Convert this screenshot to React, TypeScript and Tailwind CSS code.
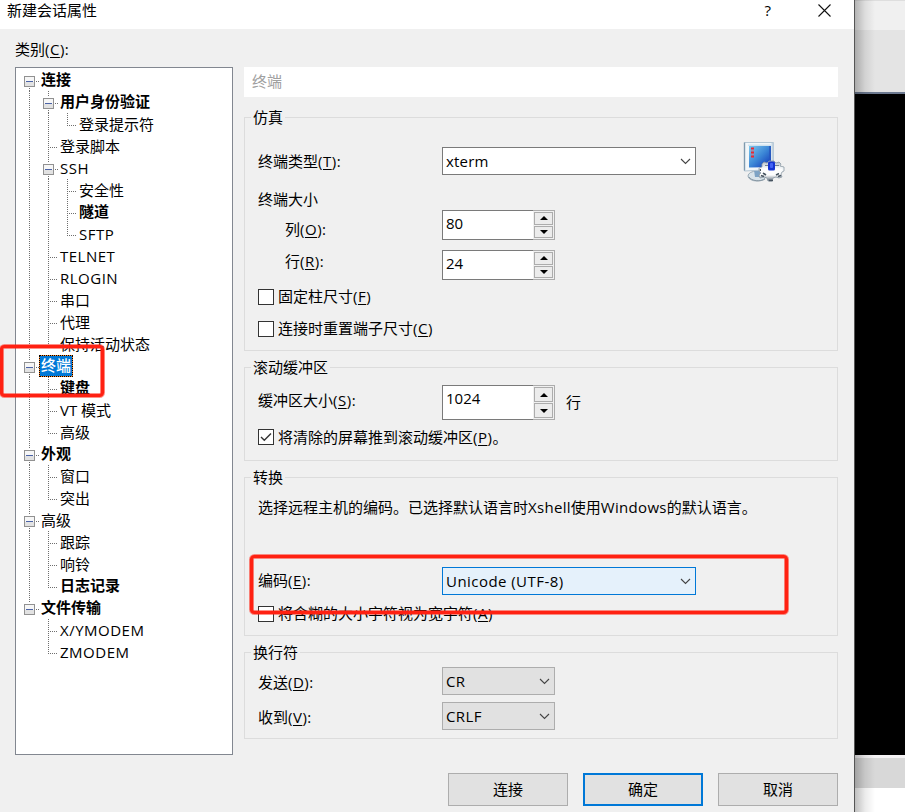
import React from 'react';
import clsx from 'clsx';

type Guide = 'line' | 'tee' | 'end' | 'none' | 'first' | 'box' | 'last';

interface TreeRow {
  label: string;
  guides: Guide[];
  bold?: boolean;
  selected?: boolean;
}

const treeRows: TreeRow[] = [
  { label: '连接', guides: ['first'], bold: true },
  { label: '用户身份验证', guides: ['line', 'box'], bold: true },
  { label: '登录提示符', guides: ['line', 'line', 'end'] },
  { label: '登录脚本', guides: ['line', 'tee'] },
  { label: 'SSH', guides: ['line', 'box'] },
  { label: '安全性', guides: ['line', 'line', 'tee'] },
  { label: '隧道', guides: ['line', 'line', 'tee'], bold: true },
  { label: 'SFTP', guides: ['line', 'line', 'end'] },
  { label: 'TELNET', guides: ['line', 'tee'] },
  { label: 'RLOGIN', guides: ['line', 'tee'] },
  { label: '串口', guides: ['line', 'tee'] },
  { label: '代理', guides: ['line', 'tee'] },
  { label: '保持活动状态', guides: ['line', 'end'] },
  { label: '终端', guides: ['box'], bold: true, selected: true },
  { label: '键盘', guides: ['line', 'tee'], bold: true },
  { label: 'VT 模式', guides: ['line', 'tee'] },
  { label: '高级', guides: ['line', 'end'] },
  { label: '外观', guides: ['box'], bold: true },
  { label: '窗口', guides: ['line', 'tee'] },
  { label: '突出', guides: ['line', 'end'] },
  { label: '高级', guides: ['box'] },
  { label: '跟踪', guides: ['line', 'tee'] },
  { label: '响铃', guides: ['line', 'tee'] },
  { label: '日志记录', guides: ['line', 'end'], bold: true },
  { label: '文件传输', guides: ['last'], bold: true },
  { label: 'X/YMODEM', guides: ['none', 'tee'] },
  { label: 'ZMODEM', guides: ['none', 'end'] },
];

// Dotted connector lines and the collapse box, one 19px cell per level
function GuideCell({ kind }: { kind: Guide }) {
  const isBox = kind === 'box' || kind === 'first' || kind === 'last';
  const dots = { stroke: '#6e6e6e', strokeDasharray: '1 1' };
  return (
    <svg width="19" height="22" viewBox="0 0 19 22" className="shrink-0" shapeRendering="crispEdges">
      {(kind === 'line' || kind === 'tee') && <line x1="9.5" y1="0" x2="9.5" y2="22" {...dots} />}
      {kind === 'end' && <line x1="9.5" y1="0" x2="9.5" y2="13" {...dots} />}
      {(kind === 'tee' || kind === 'end') && <line x1="11" y1="12.5" x2="18" y2="12.5" {...dots} />}
      {isBox && (
        <>
          {kind !== 'first' && <line x1="9.5" y1="0" x2="9.5" y2="6" {...dots} />}
          {kind !== 'last' && <line x1="9.5" y1="19" x2="9.5" y2="22" {...dots} />}
          <line x1="16" y1="12.5" x2="19" y2="12.5" {...dots} />
          <rect x="4.5" y="7.5" width="10" height="10" fill="#f6f6f6" stroke="#919191" />
          <rect x="5" y="13" width="9" height="4" fill="#e2e2e2" />
          <line x1="6" y1="12.5" x2="13" y2="12.5" stroke="#4b63a7" />
        </>
      )}
    </svg>
  );
}

function CategoryTree() {
  return (
    <div className="w-[218px] h-[688px] bg-white border border-[#828790] pt-px pl-1">
      {treeRows.map((row, i) => (
        <div key={i} className="flex h-[22px]">
          {row.guides.map((g, j) => (
            <GuideCell key={j} kind={g} />
          ))}
          <span
            className={clsx(
              'px-px border border-dotted whitespace-nowrap',
              row.bold ? 'leading-[18px]' : 'leading-[20px]',
              row.bold && !row.selected && 'font-bold',
              /^[A-Z/]+$/.test(row.label) && 'tracking-[0.5px]',
              row.selected
                ? 'font-medium text-white border-black [background:linear-gradient(#0078d7,#0078d7)_padding-box,#ff8728]'
                : 'border-transparent'
            )}
          >
            {row.label}
          </span>
        </div>
      ))}
    </div>
  );
}

// Label text with its underlined access key
function KeyLabel({ text, hotkey, end = ':' }: { text: string; hotkey: string; end?: string }) {
  return (
    <>
      {text}
      <span className="tracking-[0.5px]">
        (<span className="underline underline-offset-2 decoration-1">{hotkey}</span>)
      </span>
      {end}
    </>
  );
}

function Group({ title, className, children }: { title: string; className: string; children: React.ReactNode }) {
  return (
    <fieldset className={clsx('w-[594px] border border-[#dcdcdc] pl-[13px]', className)}>
      <legend className="-ml-[7px] px-0.5 leading-[22px]">{title}</legend>
      {children}
    </fieldset>
  );
}

function Chevron() {
  return (
    <svg width="11" height="7" viewBox="0 0 11 7" fill="none" stroke="#444" strokeWidth="1.1">
      <path d="M1 1l4.5 4.5L10 1" />
    </svg>
  );
}

function Select({ value, className }: { value: string; className: string }) {
  return (
    <div className={clsx('flex h-7 items-center justify-between border pl-[3px] pr-[4px]', className)}>
      <span>{value}</span>
      <Chevron />
    </div>
  );
}

function SpinButton({ down }: { down?: boolean }) {
  return (
    <div className="flex flex-1 items-center justify-center border border-[#acacac] bg-[#ececec]">
      <svg width="8" height="4" viewBox="0 0 8 4">
        <path d={down ? 'M0 0h8L4 4z' : 'M0 4h8L4 0z'} fill="#000" />
      </svg>
    </div>
  );
}

function Spinner({ value, className }: { value: string; className: string }) {
  return (
    <div className={clsx('flex w-[113px]', className)}>
      <div className="w-[91px] border border-r-0 border-[#7a7a7a] bg-white pl-[3px] pt-px leading-[22px]">{value}</div>
      <div className="flex w-[22px] flex-col gap-px border border-l-0 border-[#acacac] bg-[#f0f0f0] p-px">
        <SpinButton />
        <SpinButton down />
      </div>
    </div>
  );
}

function CheckRow({ checked, className, children }: { checked?: boolean; className?: string; children: React.ReactNode }) {
  return (
    <div className={clsx('flex h-4', className)}>
      <span className="flex h-4 w-4 shrink-0 items-center justify-center border border-[#333] bg-white">
        {checked && (
          <svg width="12" height="10" viewBox="0 0 12 10" fill="none" stroke="#333" strokeWidth="1.4">
            <path d="M1 5l3.3 3.3L11 1.5" />
          </svg>
        )}
      </span>
      <span className={clsx('ml-1 whitespace-nowrap', checked ? 'leading-4' : 'leading-[14px]')}>{children}</span>
    </div>
  );
}

function TerminalIcon() {
  return (
    <svg width="42" height="42" viewBox="0 0 42 42">
      <defs>
        <linearGradient id="screen" x1="0" y1="0" x2="1" y2="1">
          <stop offset="0" stopColor="#7cc9ee" />
          <stop offset="0.5" stopColor="#3b86d6" />
          <stop offset="1" stopColor="#0d2fb4" />
        </linearGradient>
        <linearGradient id="metal" x1="0" y1="0" x2="0" y2="1">
          <stop offset="0" stopColor="#a9b4bf" />
          <stop offset="0.3" stopColor="#eef2f5" />
          <stop offset="0.7" stopColor="#ffffff" />
          <stop offset="1" stopColor="#5d6d7b" />
        </linearGradient>
      </defs>
      <ellipse cx="14" cy="35" rx="9" ry="5" fill="#d9e4ea" stroke="#9aabb7" />
      <path d="M6 36c2 4 12 5 16 2" stroke="#8797a3" fill="none" />
      <path d="M11 29h7l-2 7h-4z" fill="#7ea3c4" />
      <path d="M1.500 1.500h29v27l-29 1.500z" fill="#f1f6f9" stroke="#b3c6d3" />
      <path d="M1.500 1.500v28" stroke="#7e99ad" strokeWidth="1.400" />
      <path d="M29.500 2v25" stroke="#c3d3df" strokeWidth="2" />
      <path d="M5 3.500h23V5H5z" fill="#cfe2ee" />
      <path d="M6 5h22v21L6 26.500z" fill="url(#screen)" />
      <path d="M27 5v21" stroke="#2756bd" strokeWidth="1.500" />
      <path d="M8 7.500h3M8 11.500h3M8 15.500h3" stroke="#f0252d" strokeWidth="2" />
      <path d="M8 9.500h3M8 13.500h3" stroke="#a98ba6" />
      <path
        d="M19 23l2-2 3 1 2-2h5l2 2 3-1 2 2-1 2 4 1v4l-2 1-1 2 1 3-3 1-3-1-3 1-1 3h-4l-1-3-3-1-4 1-1-3 2-2-2-2v-3l3-1z"
        fill="url(#metal)"
        stroke="#8c99a4"
        strokeWidth="0.800"
      />
      <path d="M18 34.500l3 1M26 39.500h4M35 35.500l3-1M17.500 28v2M20 32l3 2M33 34l3-1.500" stroke="#46535f" strokeWidth="1.600" />
      <path d="M21 27l-3 1v2l4 2 6 1 7-1 4-3v-1l-4-1z" fill="#fdfdfd" />
      <rect x="25" y="20.500" width="7" height="9" rx="1.500" fill="#1535d2" />
      <rect x="27" y="22" width="3" height="5" rx="1" fill="#4363f6" />
      <path d="M22 24.500h3M32 24.500h4" stroke="#74828f" />
    </svg>
  );
}

function PushButton({ label, primary }: { label: string; primary?: boolean }) {
  return (
    <button
      className={clsx(
        'h-[33px] w-[120px] bg-[#e1e1e1]',
        primary ? 'border-2 border-[#0078d7]' : 'border border-[#adadad]'
      )}
    >
      {label}
    </button>
  );
}

function Marker({ width, height, className }: { width: number; height: number; className: string }) {
  return (
    <svg width={width} height={height} className={clsx('absolute', className)} fill="none" stroke="#ff2112">
      <rect x="2.500" y="2.500" width={width - 5} height={height - 5} rx="3" strokeWidth="5" opacity="0.5" />
      <rect x="2.500" y="2.500" width={width - 5} height={height - 5} rx="3" strokeWidth="3.200" />
    </svg>
  );
}

function DesktopStrip() {
  return (
    <div className="relative flex flex-1 flex-col">
      <div className="h-px bg-[#dedede]" />
      <div className="h-[29px] bg-[#f0f0f0]" />
      <div className="h-[62px] bg-[#e4e4e4]" />
      <div className="h-0.5 bg-[#6d7a91]" />
      <div className="h-[661px] bg-black" />
      <div className="h-[3px] bg-[#f4f2f4]" />
      <div className="h-[30px] bg-[#d8d8d8]" />
      <div className="flex-1 bg-white" />
      {/* dialog drop shadow */}
      <div className="absolute inset-y-0 left-0 w-5 bg-linear-to-r from-black/25 via-black/8 to-transparent" />
    </div>
  );
}

export default function App() {
  return (
    <div className="relative flex h-[812px] w-[905px] overflow-hidden bg-white font-['Open_Sans','Noto_Sans_CJK_SC',sans-serif] text-[15px] text-black">
      <div className="flex w-[855px] flex-col border-r border-[#555] bg-[#f0f0f0]">
        <header className="flex h-[29px] justify-between bg-white pl-[7px] pr-[23px]">
          <span className="leading-[20px]">新建会话属性</span>
          <div className="flex gap-[47px]">
            <span className="leading-[20px]">?</span>
            <svg width="13" height="13" viewBox="0 0 13 13" className="mt-1" stroke="#111" strokeWidth="1.1">
              <path d="M0.500 0.500l12 12M12.500 0.500l-12 12" />
            </svg>
          </div>
        </header>

        <div className="flex">
          <div className="ml-[15px] w-[229px]">
            <div className="h-[38px] pt-[9px] leading-[22px]">
              <KeyLabel text="类别" hotkey="C" />
            </div>
            <CategoryTree />
          </div>

          <main className="w-[594px] pt-[38px]">
            <div className="h-[30px] bg-white pl-2 leading-[28px] text-[#a0a0a0]">终端</div>

            <Group title="仿真" className="mt-[9px] h-[245px]">
              <div className="flex h-[82px]">
                <div className="w-[184px] pt-[22px] leading-[22px]">
                  <KeyLabel text="终端类型" hotkey="T" />
                  <div className="mt-4">终端大小</div>
                </div>
                <Select value="xterm" className="mt-[19px] w-[254px] border-[#7a7a7a] bg-white tracking-[0.2px]" />
                <div className="ml-[47px] mt-[13px]">
                  <TerminalIcon />
                </div>
              </div>
              <div className="flex">
                <div className="w-[184px] pl-[27px] pt-2 leading-[22px]">
                  <KeyLabel text="列" hotkey="O" />
                </div>
                <Spinner value="80" className="h-[30px]" />
              </div>
              <div className="flex">
                <div className="w-[184px] pl-[27px] pt-2.5 leading-[22px]">
                  <KeyLabel text="行" hotkey="R" />
                </div>
                <Spinner value="24" className="mt-[10px] h-[30px]" />
              </div>
              <CheckRow className="mt-[9px]">
                <KeyLabel text="固定柱尺寸" hotkey="F" end="" />
              </CheckRow>
              <CheckRow className="mt-4">
                <KeyLabel text="连接时重置端子尺寸" hotkey="C" end="" />
              </CheckRow>
            </Group>

            <Group title="滚动缓冲区" className="mt-[5px] h-[105px]">
              <div className="flex pt-[7px]">
                <div className="w-[184px] pt-1 leading-[22px]">
                  <KeyLabel text="缓冲区大小" hotkey="S" />
                </div>
                <Spinner value="1024" className="h-[35px]" />
                <span className="ml-[11px] pt-[6px] leading-[22px]">行</span>
              </div>
              <CheckRow checked className="mt-[9px]">
                <KeyLabel text="将清除的屏幕推到滚动缓冲区" hotkey="P" end="。" />
              </CheckRow>
            </Group>

            <Group title="转换" className="mt-[5px] h-[170px]">
              <p className="pt-2 leading-[22px] whitespace-nowrap">
                选择远程主机的编码。已选择默认语言时<span className="tracking-[0.3px]">Xshell</span>使用
                <span className="tracking-[0.3px]">Windows</span>的默认语言。
              </p>
              <div className="mt-[49px] flex">
                <div className="w-[184px] pt-0.5 leading-[22px]">
                  <KeyLabel text="编码" hotkey="E" />
                </div>
                <Select value="Unicode (UTF-8)" className="w-[254px] border-[#0078d7] bg-[#e5f1fb] tracking-[0.45px]" />
              </div>
              <CheckRow className="mt-[11px]">
                <KeyLabel text="将含糊的大小字符视为宽字符" hotkey="A" end="" />
              </CheckRow>
            </Group>

            <Group title="换行符" className="mt-[5px] h-[98px]">
              <div className="mt-1 flex">
                <div className="w-[184px] pt-1 leading-[22px]">
                  <KeyLabel text="发送" hotkey="D" />
                </div>
                <Select value="CR" className="w-[113px] border-[#adadad] bg-[#e1e1e1] tracking-[0.4px]" />
              </div>
              <div className="mt-[7px] flex">
                <div className="w-[184px] pt-1 leading-[22px]">
                  <KeyLabel text="收到" hotkey="V" />
                </div>
                <Select value="CRLF" className="w-[113px] border-[#adadad] bg-[#e1e1e1] tracking-[0.4px]" />
              </div>
            </Group>

            <div className="mt-[34px] flex justify-end gap-[15px]">
              <PushButton label="连接" />
              <PushButton label="确定" primary />
              <PushButton label="取消" />
            </div>
          </main>
        </div>
      </div>

      <DesktopStrip />

      <Marker width={106} height={54} className="-left-px top-[344px]" />
      <Marker width={540} height={61} className="left-[249px] top-[554px]" />
    </div>
  );
}
